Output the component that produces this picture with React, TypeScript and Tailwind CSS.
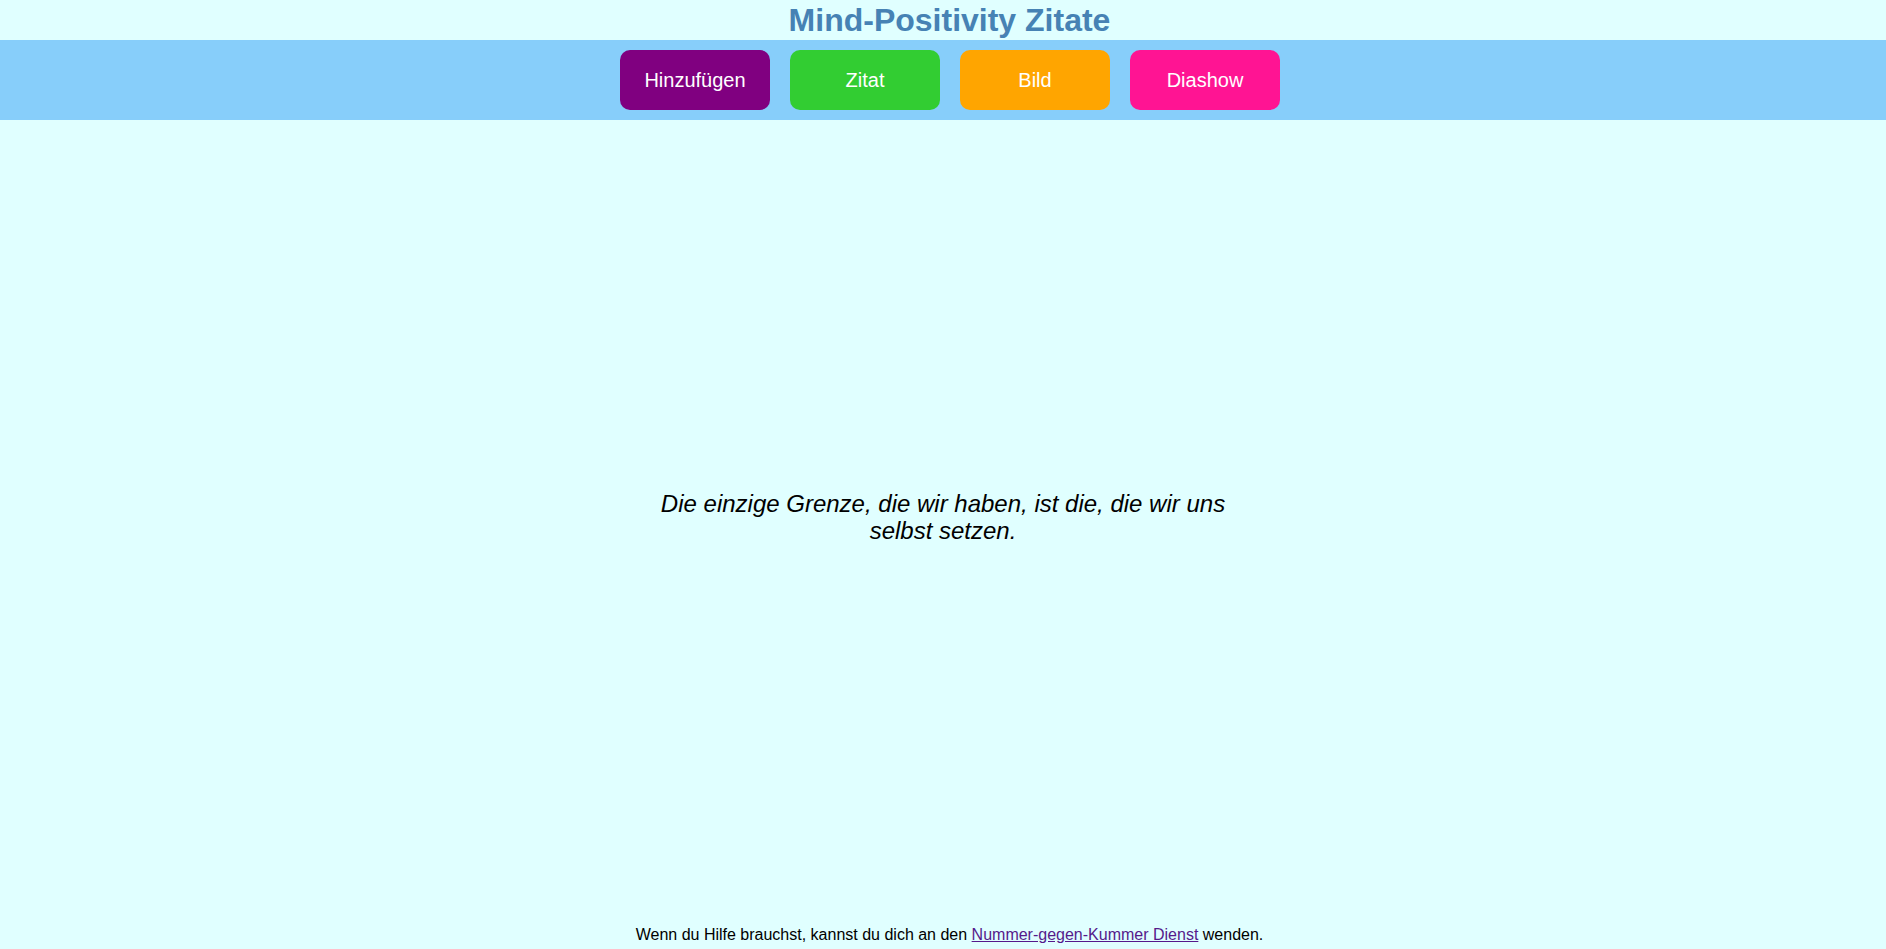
import React from "react";

export default function App() {
  const buttons = [
    { label: "Hinzufügen", cls: "bg-[#800080]" },
    { label: "Zitat", cls: "bg-[#32cd32]" },
    { label: "Bild", cls: "bg-[#ffa500]" },
    { label: "Diashow", cls: "bg-[#ff1493]" },
  ];
  return (
    <div
      className="min-h-screen h-[949px] flex flex-col bg-[#e0ffff] overflow-hidden"
      style={{ fontFamily: '"Liberation Sans", Arial, sans-serif' }}
    >
      <h1 className="h-10 leading-[40px] text-[32px] font-bold text-[#4682b4] text-center pl-[13px]">
        Mind-Positivity Zitate
      </h1>
      <nav className="h-20 bg-[#87cefa] flex items-center justify-center gap-5 pl-[14px]">
        {buttons.map((b) => (
          <button
            key={b.label}
            className={`w-[150px] h-[60px] rounded-[10px] text-white text-[20px] ${b.cls}`}
          >
            {b.label}
          </button>
        ))}
      </nav>
      <main className="flex-1 flex items-center justify-center pb-[11px]">
        <p className="w-[600px] text-center italic text-[24px] text-black leading-[27.6px]">
          Die einzige Grenze, die wir haben, ist die, die wir uns selbst setzen.
        </p>
      </main>
      <footer className="text-center text-[16px] text-black pl-[13px] pb-[5px] leading-[18.4px]">
        Wenn du Hilfe brauchst, kannst du dich an den{" "}
        <a href="#" className="text-[#551a8b] underline">
          Nummer-gegen-Kummer Dienst
        </a>{" "}
        wenden.
      </footer>
    </div>
  );
}
